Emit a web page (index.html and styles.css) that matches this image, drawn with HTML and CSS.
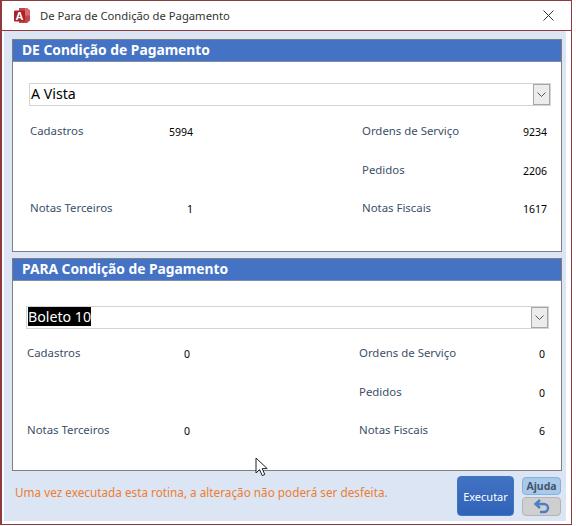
FILE: index.html
```html
<!DOCTYPE html>
<html lang="pt">
<head>
  <meta charset="UTF-8" />
  <title>De Para de Condição de Pagamento</title>
  <link rel="stylesheet" href="styles.css">
</head>
<body>
  <div class="window">
    <div class="titlebar">
      <svg class="app-icon" width="17" height="17" viewBox="0 0 17 17">
        <path d="M5 1h8l3 2.500v10l-3 2.500H5z" fill="#c8444c"/>
        <path d="M11 1h2l3 2.500v5h-5z" fill="#d96a70"/>
        <rect x="0" y="3.500" width="11" height="11" rx="1" fill="#a5232b"/>
        <text class="app-letter" x="5.500" y="12.500" text-anchor="middle">A</text>
      </svg>
      <span class="title">De Para de Condição de Pagamento</span>
      <svg class="close" width="11" height="11" viewBox="0 0 11 11">
        <path d="M.5.5l10 10M10.500.5l-10 10" stroke="#333" stroke-width="1" fill="none"/>
      </svg>
    </div>

    <div class="content">
      <section class="panel">
        <h2 class="panel-title">DE Condição de Pagamento</h2>
        <div class="panel-body panel-de">
          <div class="combo">
            <span class="combo-text">A Vista</span>
            <span class="combo-btn"><svg width="9" height="5" viewBox="0 0 9 5"><path d="M.5.5l4 4 4-4" stroke="#555" fill="none"/></svg></span>
          </div>
          <div class="stats">
            <span class="label">Cadastros</span><span class="num short">5994</span><span class="label">Ordens de Serviço</span><span class="num">9234</span>
            <span></span><span></span><span class="label">Pedidos</span><span class="num">2206</span>
            <span class="label">Notas Terceiros</span><span class="num short">1</span><span class="label">Notas Fiscais</span><span class="num">1617</span>
          </div>
        </div>
      </section>

      <section class="panel">
        <h2 class="panel-title">PARA Condição de Pagamento</h2>
        <div class="panel-body panel-para">
          <div class="combo">
            <span class="combo-text"><span class="selected">Boleto 10</span></span>
            <span class="combo-btn"><svg width="9" height="5" viewBox="0 0 9 5"><path d="M.5.5l4 4 4-4" stroke="#555" fill="none"/></svg></span>
          </div>
          <div class="stats">
            <span class="label">Cadastros</span><span class="num short">0</span><span class="label">Ordens de Serviço</span><span class="num">0</span>
            <span></span><span></span><span class="label">Pedidos</span><span class="num">0</span>
            <span class="label">Notas Terceiros</span><span class="num short">0</span><span class="label">Notas Fiscais</span><span class="num">6</span>
          </div>
        </div>
      </section>

      <div class="footer">
        <p class="warning">Uma vez executada esta rotina, a alteração não poderá ser desfeita.</p>
        <button class="btn-run">Executar</button>
        <div class="side-btns">
          <button class="btn-help">Ajuda</button>
          <button class="btn-back">
            <svg width="17" height="15" viewBox="0 0 17 15"><path d="M7 1 2.500 5 7 9M3 5H11a3.800 3.800 0 0 1 0 8H7" stroke="#4a7fc4" stroke-width="2.400" fill="none"/></svg>
          </button>
        </div>
      </div>
    </div>
  </div>

  <svg class="cursor" width="14" height="20" viewBox="0 0 14 20">
    <path d="M1 1v15l3.600-3.400 2.600 6 2.600-1.100-2.600-5.900h5z" fill="#fff" stroke="#222"/>
  </svg>
</body>
</html>
```

FILE: styles.css
```css
body {
  margin: 0;
  background: #fff;
  font-family: "Noto Sans", sans-serif;
}

.window {
  width: 572px;
  height: 525px;
  box-sizing: border-box;
  border: 1px solid #8e3b40;
  border-left-width: 2px;
  display: flex;
  flex-direction: column;
  background: #fff;
}

.titlebar {
  height: 29px;
  flex: none;
  display: flex;
  align-items: center;
  padding: 0 17px 0 12px;
  border-bottom: 1px solid #8e3b40;
  color: #333;
}

.app-icon {
  margin-right: 9px;
}

.app-letter {
  fill: #fff;
  font-family: "Liberation Sans", sans-serif;
  font-size: 11px;
  font-weight: 700;
}

.title {
  font-size: 11.25px;
  flex: 1;
}

.content {
  flex: 1;
  margin: 0 5px 3px 2px;
  padding: 8px 4px 0 8px;
  background: #dbe5f4;
  display: flex;
  flex-direction: column;
  gap: 6px;
}

.panel {
  height: 213px;
  box-sizing: border-box;
  border: 1px solid #7f7f7f;
  background: #fff;
  display: flex;
  flex-direction: column;
}

.panel-title {
  margin: 0;
  height: 22px;
  line-height: 19px;
  padding-left: 9px;
  background: #4472c4;
  border-bottom: 1px solid #7f8ea8;
  color: #fff;
  font-size: 13.8px;
  font-weight: 700;
  box-sizing: border-box;
}

.panel-de {
  padding: 21px 10px 0 16px;
}

.panel-para {
  padding: 25px 12px 0 13px;
}

.combo {
  height: 23px;
  box-sizing: border-box;
  border: 1px solid #d4d4d4;
  display: flex;
  align-items: center;
  justify-content: space-between;
  padding-left: 1px;
  font-size: 14.2px;
  color: #000;
}

.combo-text {
  margin-top: -2px;
}

.selected {
  background: #000;
  color: #fff;
}

.combo-btn {
  width: 17px;
  height: 21px;
  border: 1px solid #a6a6a6;
  background: #ececec;
  box-sizing: border-box;
  display: flex;
  align-items: center;
  justify-content: center;
}

.stats {
  display: grid;
  grid-template-columns: 101px 231px 1fr auto;
  grid-auto-rows: 38.5px;
  margin: 17px 4px 0 1px;
}

.panel-para .stats {
  margin-top: 16px;
}

.label {
  font-size: 11.4px;
  color: #3b4f68;
}

.num {
  font-size: 10.5px;
  color: #000;
  text-align: right;
  padding-top: 2px;
}

.short {
  width: 62px;
}

.footer {
  flex: 1;
  display: flex;
  align-items: flex-start;
  margin-top: -1px;
}

.warning {
  flex: 1;
  margin: 8px 0 0 3px;
  font-size: 11.75px;
  color: #ed7d31;
}

.btn-run {
  width: 57px;
  height: 40px;
  border: 1px solid #3f74bf;
  border-radius: 4px;
  background: linear-gradient(#4272c2, #2f62b8);
  color: #fff;
  font-family: "Noto Sans", sans-serif;
  font-size: 11px;
  padding: 0;
}

.side-btns {
  display: flex;
  flex-direction: column;
  gap: 2px;
  margin: 1px 1px 0 8px;
}

.btn-help {
  width: 39px;
  height: 18px;
  border: 1px solid #86b1dd;
  border-radius: 4px;
  background: #a9c9ea;
  color: #44546a;
  font-family: "Noto Sans", sans-serif;
  font-size: 10.5px;
  font-weight: 700;
  padding: 0;
}

.btn-back {
  width: 39px;
  height: 19px;
  border: 1px solid #b4b4b4;
  border-radius: 4px;
  background: #cfcfcf;
  padding: 0;
  display: flex;
  align-items: center;
  justify-content: center;
}

.cursor {
  position: absolute;
  left: 255px;
  top: 457px;
}
```
